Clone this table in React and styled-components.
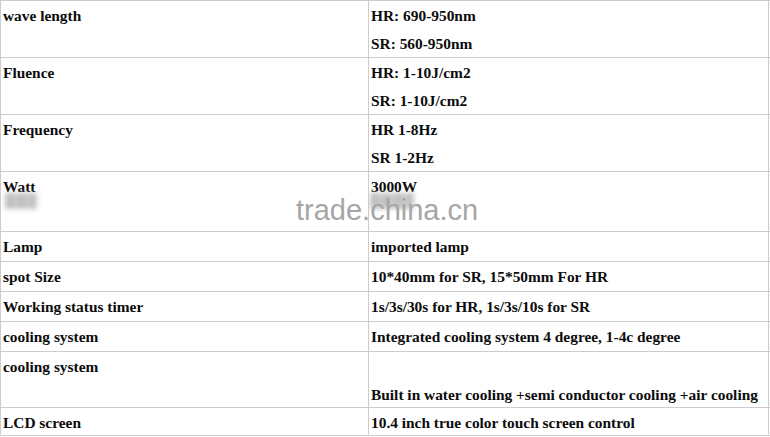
import React from "react";
import styled, { createGlobalStyle } from "styled-components";

const rows = [
  { label: "wave length", value: ["HR: 690-950nm", "SR: 560-950nm"], h: 57 },
  { label: "Fluence", value: ["HR: 1-10J/cm2", "SR: 1-10J/cm2"], h: 57 },
  { label: "Frequency", value: ["HR 1-8Hz", "SR 1-2Hz"], h: 57 },
  { label: "Watt", value: ["3000W"], h: 60, mark: true },
  { label: "Lamp", value: ["imported lamp"], h: 30 },
  { label: "spot Size", value: ["10*40mm for SR, 15*50mm For HR"], h: 30 },
  { label: "Working status timer", value: ["1s/3s/30s for HR, 1s/3s/10s for SR"], h: 30 },
  { label: "cooling system", value: ["Integrated cooling system 4 degree, 1-4c degree"], h: 30 },
  { label: "cooling system", value: ["", "Built in water cooling +semi conductor cooling +air cooling"], h: 56 },
  { label: "LCD screen", value: ["10.4 inch true color touch screen control"], h: 28 },
];

const App = () => {
  return (
    <>
      <GlobalStyle />
      <Table>
        {rows.map((r, i) => (
          <Row key={i} $h={r.h}>
            <Cell>
              {r.label}
              {r.mark && <Smudge $left={4} $w={32} />}
            </Cell>
            <Cell $last>
              {r.value.map((v, j) => (
                <Line key={j}>{v || "\u00a0"}</Line>
              ))}
              {r.mark && <Smudge $left={1} $w={44} />}
            </Cell>
            {r.mark && <Watermark>trade.china.cn</Watermark>}
          </Row>
        ))}
      </Table>
    </>
  );
};
export default App;

const GlobalStyle = createGlobalStyle`
  body {
    margin: 0;
    background: #fff;
  }
`;

const Table = styled.div`
  width: 769px;
  border-top: 1px solid #cdcdcd;
  border-left: 1px solid #cdcdcd;
  font-family: "Liberation Serif", "Times New Roman", serif;
  font-weight: bold;
  font-size: 15.4px;
  color: #0c0c0c;
`;

const Row = styled.div`
  position: relative;
  display: grid;
  grid-template-columns: 368px 400px;
  height: ${(p) => p.$h}px;
  border-bottom: 1px solid #cdcdcd;
  box-sizing: border-box;
`;

const Cell = styled.div`
  position: relative;
  padding: 1px 2px 0 2px;
  line-height: 28px;
  border-right: 1px solid #cdcdcd;
  white-space: nowrap;
  overflow: hidden;
`;

const Line = styled.div`
  height: 28px;
`;

const Smudge = styled.div`
  position: absolute;
  left: ${(p) => p.$left}px;
  top: 21px;
  width: ${(p) => p.$w}px;
  height: 16px;
  background: repeating-linear-gradient(
    90deg,
    #d8d8d8 0px,
    #8a8a8a 3px,
    #c4c4c4 6px,
    #9a9a9a 9px,
    #dcdcdc 12px
  );
  filter: blur(2.5px);
  opacity: 0.75;
`;

const Watermark = styled.div`
  position: absolute;
  left: 295px;
  top: 22px;
  font-family: "Liberation Sans", Arial, sans-serif;
  font-weight: normal;
  font-size: 29px;
  line-height: 32px;
  color: #a6a6a6;
  pointer-events: none;
`;
